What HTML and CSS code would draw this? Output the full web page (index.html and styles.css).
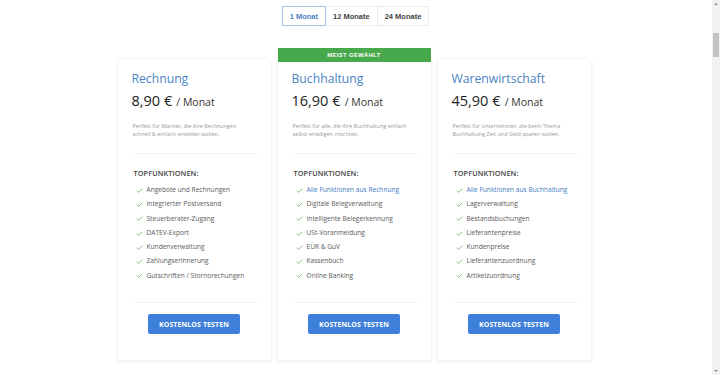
FILE: index.html
```html
<!DOCTYPE html>
<html lang="de">
<head>
<meta charset="utf-8">
<title>Preise</title>
<link rel="stylesheet" href="styles.css">
</head>
<body>
<div class="page">
  <div class="toggle">
    <button class="tbtn active">1 Monat</button>
    <button class="tbtn">12 Monate</button>
    <button class="tbtn">24 Monate</button>
  </div>

  <div class="plans">
    <div class="card">
      <h2 class="title">Rechnung</h2>
      <div class="price"><span class="amount">8,90 €</span> <span class="per">/ Monat</span></div>
      <p class="desc">Perfekt für Macher, die ihre Rechnungen schnell &amp; einfach erstellen wollen.</p>
      <hr class="sep">
      <div class="feat-head">TOPFUNKTIONEN:</div>
      <ul class="feats">
        <li><svg class="chk" viewBox="0 0 8 6"><path d="M0.6 3.2 L2.8 5.2 L7.4 0.8"/></svg>Angebote und Rechnungen</li>
        <li><svg class="chk" viewBox="0 0 8 6"><path d="M0.6 3.2 L2.8 5.2 L7.4 0.8"/></svg>Integrierter Postversand</li>
        <li><svg class="chk" viewBox="0 0 8 6"><path d="M0.6 3.2 L2.8 5.2 L7.4 0.8"/></svg>Steuerberater-Zugang</li>
        <li><svg class="chk" viewBox="0 0 8 6"><path d="M0.6 3.2 L2.8 5.2 L7.4 0.8"/></svg>DATEV-Export</li>
        <li><svg class="chk" viewBox="0 0 8 6"><path d="M0.6 3.2 L2.8 5.2 L7.4 0.8"/></svg>Kundenverwaltung</li>
        <li><svg class="chk" viewBox="0 0 8 6"><path d="M0.6 3.2 L2.8 5.2 L7.4 0.8"/></svg>Zahlungserinnerung</li>
        <li><svg class="chk" viewBox="0 0 8 6"><path d="M0.6 3.2 L2.8 5.2 L7.4 0.8"/></svg>Gutschriften / Stornorechungen</li>
      </ul>
      <hr class="sep sep-bottom">
      <div class="cta-row"><button class="cta">KOSTENLOS TESTEN</button></div>
    </div>

    <div class="card featured">
      <div class="badge">MEIST GEWÄHLT</div>
      <h2 class="title">Buchhaltung</h2>
      <div class="price"><span class="amount">16,90 €</span> <span class="per">/ Monat</span></div>
      <p class="desc">Perfekt für alle, die ihre Buchhaltung einfach selbst erledigen möchten.</p>
      <hr class="sep">
      <div class="feat-head">TOPFUNKTIONEN:</div>
      <ul class="feats">
        <li class="hl"><svg class="chk" viewBox="0 0 8 6"><path d="M0.6 3.2 L2.8 5.2 L7.4 0.8"/></svg>Alle Funktionen aus Rechnung</li>
        <li><svg class="chk" viewBox="0 0 8 6"><path d="M0.6 3.2 L2.8 5.2 L7.4 0.8"/></svg>Digitale Belegverwaltung</li>
        <li><svg class="chk" viewBox="0 0 8 6"><path d="M0.6 3.2 L2.8 5.2 L7.4 0.8"/></svg>Intelligente Belegerkennung</li>
        <li><svg class="chk" viewBox="0 0 8 6"><path d="M0.6 3.2 L2.8 5.2 L7.4 0.8"/></svg>USt-Voranmeldung</li>
        <li><svg class="chk" viewBox="0 0 8 6"><path d="M0.6 3.2 L2.8 5.2 L7.4 0.8"/></svg>EÜR &amp; GuV</li>
        <li><svg class="chk" viewBox="0 0 8 6"><path d="M0.6 3.2 L2.8 5.2 L7.4 0.8"/></svg>Kassenbuch</li>
        <li><svg class="chk" viewBox="0 0 8 6"><path d="M0.6 3.2 L2.8 5.2 L7.4 0.8"/></svg>Online Banking</li>
      </ul>
      <hr class="sep sep-bottom">
      <div class="cta-row"><button class="cta">KOSTENLOS TESTEN</button></div>
    </div>

    <div class="card">
      <h2 class="title">Warenwirtschaft</h2>
      <div class="price"><span class="amount">45,90 €</span> <span class="per">/ Monat</span></div>
      <p class="desc">Perfekt für Unternehmer, die beim Thema Buchhaltung Zeit und Geld sparen wollen.</p>
      <hr class="sep">
      <div class="feat-head">TOPFUNKTIONEN:</div>
      <ul class="feats">
        <li class="hl"><svg class="chk" viewBox="0 0 8 6"><path d="M0.6 3.2 L2.8 5.2 L7.4 0.8"/></svg>Alle Funktionen aus Buchhaltung</li>
        <li><svg class="chk" viewBox="0 0 8 6"><path d="M0.6 3.2 L2.8 5.2 L7.4 0.8"/></svg>Lagerverwaltung</li>
        <li><svg class="chk" viewBox="0 0 8 6"><path d="M0.6 3.2 L2.8 5.2 L7.4 0.8"/></svg>Bestandsbuchungen</li>
        <li><svg class="chk" viewBox="0 0 8 6"><path d="M0.6 3.2 L2.8 5.2 L7.4 0.8"/></svg>Lieferantenpreise</li>
        <li><svg class="chk" viewBox="0 0 8 6"><path d="M0.6 3.2 L2.8 5.2 L7.4 0.8"/></svg>Kundenpreise</li>
        <li><svg class="chk" viewBox="0 0 8 6"><path d="M0.6 3.2 L2.8 5.2 L7.4 0.8"/></svg>Lieferantenzuordnung</li>
        <li><svg class="chk" viewBox="0 0 8 6"><path d="M0.6 3.2 L2.8 5.2 L7.4 0.8"/></svg>Artikelzuordnung</li>
      </ul>
      <hr class="sep sep-bottom">
      <div class="cta-row"><button class="cta">KOSTENLOS TESTEN</button></div>
    </div>
  </div>
</div>

<div class="scrollbar">
  <div class="sb-arrow sb-up"></div>
  <div class="sb-thumb"></div>
  <div class="sb-arrow sb-down"></div>
</div>
</body>
</html>
```

FILE: styles.css
```css
* { box-sizing: border-box; }

html, body {
  margin: 0;
  padding: 0;
  background: #fff;
  overflow: hidden;
}

body {
  width: 720px;
  height: 375px;
  font-family: "Open Sans", "Liberation Sans", sans-serif;
  color: #333;
}

.page {
  width: 712px;
  display: flex;
  flex-direction: column;
  align-items: center;
  padding-top: 6px;
}

/* period toggle */
.toggle {
  display: flex;
}

.tbtn {
  font-family: "Liberation Sans", Arial, sans-serif;
  font-weight: bold;
  font-size: 7.5px;
  color: #444;
  background: #fff;
  border: 1px solid #ececec;
  height: 20px;
  padding: 0 7px;
  margin: 0;
  margin-left: -1px;
  cursor: pointer;
}

.tbtn.active {
  color: #4b7fc4;
  border-color: #a9c1e3;
  position: relative;
  z-index: 1;
}

/* plans */
.plans {
  display: grid;
  grid-template-columns: repeat(3, 153px);
  column-gap: 7px;
  margin-top: 33px;
  margin-left: -4px;
}

.card {
  position: relative;
  background: #fff;
  box-shadow: 0 1px 4px rgba(0, 0, 0, 0.09), 0 0 1px rgba(0, 0, 0, 0.05);
  padding: 12px 14px 28px 14px;
  height: 301px;
}

.badge {
  position: absolute;
  left: 0;
  right: 0;
  top: -11px;
  height: 14px;
  background: #47a94b;
  color: #fff;
  font-family: "Liberation Sans", Arial, sans-serif;
  font-weight: bold;
  font-size: 5.8px;
  letter-spacing: 0.4px;
  display: flex;
  align-items: center;
  justify-content: center;
}

.title {
  margin: 0;
  font-size: 12.2px;
  font-weight: 500;
  line-height: 16px;
  color: #4a84c4;
}

.price {
  margin-top: 5px;
  line-height: 16px;
  color: #222;
  white-space: nowrap;
}

.amount {
  font-size: 14.5px;
}

.per {
  font-size: 10.5px;
  color: #333;
}

.desc {
  margin: 12px 0 0 1px;
  font-size: 5.5px;
  line-height: 8px;
  color: #9a9a9a;
  padding-right: 6px;
}

.sep {
  border: 0;
  border-top: 1px solid #f0f0f0;
  margin: 15px 0 0 1px;
  height: 0;
}

.feat-head {
  margin: 14px 0 0 2px;
  font-size: 7.3px;
  font-weight: 600;
  line-height: 10px;
  color: #444;
  letter-spacing: 0.1px;
}

.feats {
  list-style: none;
  margin: 5px 0 0 0;
  padding: 0 0 0 4px;
}

.feats li {
  display: flex;
  align-items: center;
  font-size: 6.6px;
  line-height: 14.3px;
  color: #5a5a5a;
  white-space: nowrap;
}

.feats li.hl {
  color: #3f7cc8;
}

.chk {
  width: 7px;
  height: 5px;
  margin-right: 4px;
  flex: none;
}

.chk path {
  fill: none;
  stroke: #74b46a;
  stroke-width: 1;
}

.sep-bottom {
  margin-top: 19px;
}

.cta-row {
  display: flex;
  justify-content: center;
  margin-top: 11px;
}

.cta {
  width: 92px;
  height: 20px;
  border: 0;
  border-radius: 2px;
  background: #3e80d9;
  color: #fff;
  font-family: "Open Sans", "Liberation Sans", sans-serif;
  font-weight: 700;
  font-size: 7px;
  letter-spacing: 0.1px;
  padding: 0;
  cursor: pointer;
}

/* fake window scrollbar */
.scrollbar {
  position: fixed;
  top: 0;
  right: 0;
  width: 8px;
  height: 375px;
  background: #f1f1f1;
}

.sb-thumb {
  position: absolute;
  left: 1px;
  right: 1px;
  top: 33px;
  height: 24px;
  background: #c4c4c4;
}

.sb-arrow {
  position: absolute;
  left: 2px;
  width: 0;
  height: 0;
  border-left: 2px solid transparent;
  border-right: 2px solid transparent;
}

.sb-up {
  top: 3px;
  border-bottom: 2px solid #888;
}

.sb-down {
  bottom: 3px;
  border-top: 2px solid #888;
}
```
